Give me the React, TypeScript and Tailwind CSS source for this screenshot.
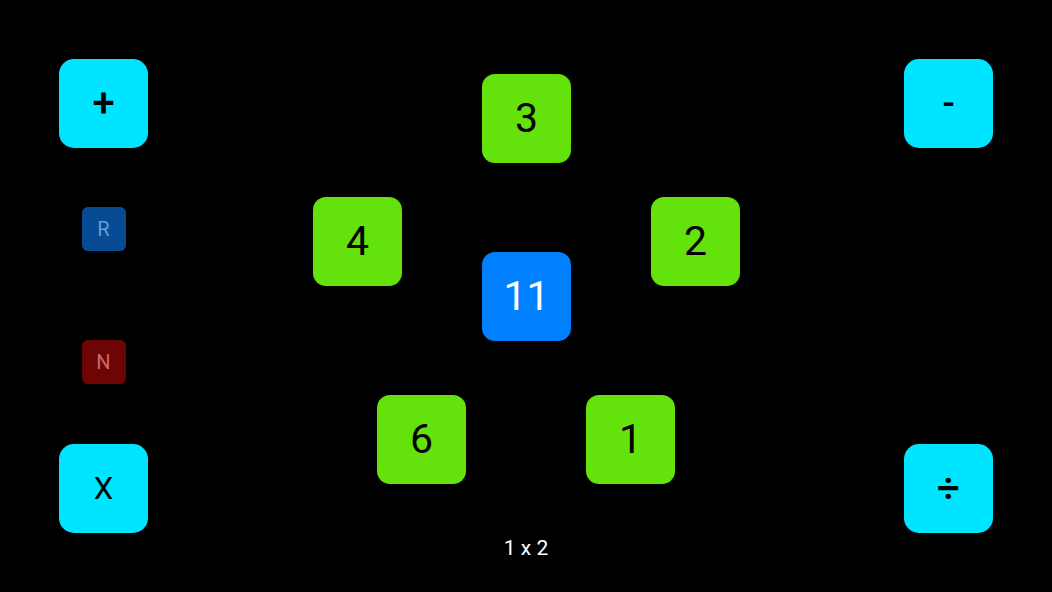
import React from 'react';

type Tile = { value: string; left: string; top: string; tone: 'green' | 'blue' };

// positions on the game board (center area) are the content itself
const tiles: Tile[] = [
  { value: '3', left: 'left-[275px]', top: 'top-[74px]', tone: 'green' },
  { value: '4', left: 'left-[106px]', top: 'top-[197px]', tone: 'green' },
  { value: '2', left: 'left-[444px]', top: 'top-[197px]', tone: 'green' },
  { value: '11', left: 'left-[275px]', top: 'top-[252px]', tone: 'blue' },
  { value: '6', left: 'left-[170px]', top: 'top-[395px]', tone: 'green' },
  { value: '1', left: 'left-[379px]', top: 'top-[395px]', tone: 'green' },
];

function OpButton({ label, className = '' }: { label: string; className?: string }) {
  return (
    <button
      className={
        'w-[89px] h-[89px] rounded-[15px] bg-[#00e5ff] text-black leading-none flex items-center justify-center ' +
        className
      }
    >
      {label}
    </button>
  );
}

function SmallButton({ label, className }: { label: string; className: string }) {
  return (
    <button
      className={
        'w-[44px] h-[44px] rounded-[6px] text-[20px] leading-none flex items-center justify-center ' + className
      }
    >
      {label}
    </button>
  );
}

export default function App() {
  return (
    <div
      className="w-[1052px] h-[592px] bg-black flex overflow-hidden select-none"
      style={{ fontFamily: 'Roboto, "Noto Sans", sans-serif' }}
    >
      {/* Left controls */}
      <div className="w-[207px] flex flex-col items-center pt-[59px]">
        <OpButton label="+" className="text-[40px] font-medium" />
        <SmallButton label="R" className="mt-[59px] bg-[#064b93] text-[#6a9ad6]" />
        <SmallButton label="N" className="mt-[89px] bg-[#6e0505] text-[#c86a6a]" />
        <OpButton label="X" className="mt-[60px] text-[31px]" />
      </div>

      {/* Board */}
      <div className="relative flex-1 flex flex-col justify-end items-center pb-[31px]">
        {tiles.map((t) => (
          <div
            key={t.value}
            className={
              'absolute w-[89px] h-[89px] rounded-[13px] flex items-center justify-center text-[41px] leading-none ' +
              t.left +
              ' ' +
              t.top +
              ' ' +
              (t.tone === 'blue' ? 'bg-[#0080ff] text-white' : 'bg-[#63e20b] text-black')
            }
          >
            {t.value}
          </div>
        ))}
        <p className="text-white text-[21px] leading-[26px]">1 x 2</p>
      </div>

      {/* Right controls */}
      <div className="w-[207px] flex flex-col items-center pt-[59px]">
        <OpButton label="-" className="text-[36px] font-medium" />
        <OpButton label="÷" className="mt-[296px] text-[40px] font-medium" />
      </div>
    </div>
  );
}
